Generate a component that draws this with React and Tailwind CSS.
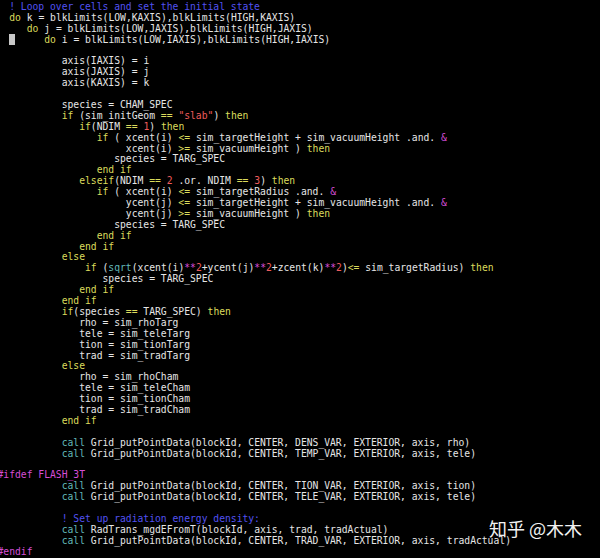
import React from "react";

// source lines of the vim buffer, leading spaces are the real indentation
const lines = [
  "  ! Loop over cells and set the initial state",
  "  do k = blkLimits(LOW,KAXIS),blkLimits(HIGH,KAXIS)",
  "     do j = blkLimits(LOW,JAXIS),blkLimits(HIGH,JAXIS)",
  "        do i = blkLimits(LOW,IAXIS),blkLimits(HIGH,IAXIS)",
  "",
  "           axis(IAXIS) = i",
  "           axis(JAXIS) = j",
  "           axis(KAXIS) = k",
  "",
  "           species = CHAM_SPEC",
  '           if (sim_initGeom == "slab") then',
  "              if(NDIM == 1) then",
  "                 if ( xcent(i) <= sim_targetHeight + sim_vacuumHeight .and. &",
  "                      xcent(i) >= sim_vacuumHeight ) then",
  "                    species = TARG_SPEC",
  "                 end if",
  "              elseif(NDIM == 2 .or. NDIM == 3) then",
  "                 if ( xcent(i) <= sim_targetRadius .and. &",
  "                      ycent(j) <= sim_targetHeight + sim_vacuumHeight .and. &",
  "                      ycent(j) >= sim_vacuumHeight ) then",
  "                    species = TARG_SPEC",
  "                 end if",
  "              end if",
  "           else",
  "               if (sqrt(xcent(i)**2+ycent(j)**2+zcent(k)**2)<= sim_targetRadius) then",
  "                  species = TARG_SPEC",
  "              end if",
  "           end if",
  "           if(species == TARG_SPEC) then",
  "              rho = sim_rhoTarg",
  "              tele = sim_teleTarg",
  "              tion = sim_tionTarg",
  "              trad = sim_tradTarg",
  "           else",
  "              rho = sim_rhoCham",
  "              tele = sim_teleCham",
  "              tion = sim_tionCham",
  "              trad = sim_tradCham",
  "           end if",
  "",
  "           call Grid_putPointData(blockId, CENTER, DENS_VAR, EXTERIOR, axis, rho)",
  "           call Grid_putPointData(blockId, CENTER, TEMP_VAR, EXTERIOR, axis, tele)",
  "",
  "#ifdef FLASH_3T",
  "           call Grid_putPointData(blockId, CENTER, TION_VAR, EXTERIOR, axis, tion)",
  "           call Grid_putPointData(blockId, CENTER, TELE_VAR, EXTERIOR, axis, tele)",
  "",
  "           ! Set up radiation energy density:",
  "           call RadTrans_mgdEFromT(blockId, axis, trad, tradActual)",
  "           call Grid_putPointData(blockId, CENTER, TRAD_VAR, EXTERIOR, axis, tradActual)",
  "#endif",
];

const colors = {
  text: "text-[#e6e6e6]",
  keyword: "text-[#dcdc5c]",
  comment: "text-[#5252f2]",
  number: "text-[#ee5c5c]",
  special: "text-[#d64ed6]",
  builtin: "text-[#62b9b9]",
};

const keywords = ["do", "if", "then", "end", "else", "elseif"];
const builtins = ["call", "sqrt"];

// very small fortran highlighter, just enough for this buffer
function tokenize(line) {
  const trimmed = line.trim();
  if (trimmed.startsWith("!")) return [[line, "comment"]];
  if (trimmed.startsWith("#")) return [[line, "special"]];

  const re = /("[^"]*")|(\*\*)|(==|<=|>=)|(&)|(\b\d+\b)|([A-Za-z_][A-Za-z0-9_]*)|(\s+)|(.)/g;
  const out = [];
  let m;
  while ((m = re.exec(line)) !== null) {
    const [tok, str, pow, cmp, amp, num, word] = m;
    let kind = "text";
    if (str || num) kind = "number";
    else if (pow || amp) kind = "special";
    else if (cmp) kind = "keyword";
    else if (word && keywords.includes(word)) kind = "keyword";
    else if (word && builtins.includes(word)) kind = "builtin";
    out.push([tok, kind]);
  }
  return out;
}

function CodeLine({ line, index }) {
  const parts = tokenize(line);

  // cursor sits on column 2 of the "do i" line
  if (index === 3) {
    return (
      <div className="h-[10.9px]">
        <span>{"  "}</span>
        <span className="bg-[#c8c8c8] text-black"> </span>
        {parts.map(([t, k], i) => (
          <span key={i} className={colors[k]}>
            {i === 0 ? t.slice(3) : t}
          </span>
        ))}
      </div>
    );
  }

  return (
    <div className="h-[10.9px]">
      {parts.length === 0
        ? " "
        : parts.map(([t, k], i) => (
            <span key={i} className={colors[k]}>
              {t}
            </span>
          ))}
    </div>
  );
}

export default function App() {
  return (
    <div className="relative w-[600px] h-[558px] overflow-hidden bg-black">
      <div
        className="-ml-[2.5px] pt-[2px] whitespace-pre text-[9.7px] leading-[10.9px] text-[#e6e6e6]"
        style={{ fontFamily: '"DejaVu Sans Mono", monospace' }}
      >
        {lines.map((line, i) => (
          <CodeLine key={i} line={line} index={i} />
        ))}
      </div>

      <div
        className="absolute left-[489px] top-[519px] text-[18px] leading-none text-[#f2f2f2]"
        style={{ fontFamily: '"Noto Sans CJK SC", "Noto Sans", sans-serif' }}
      >
        知乎 @木木
      </div>
    </div>
  );
}
